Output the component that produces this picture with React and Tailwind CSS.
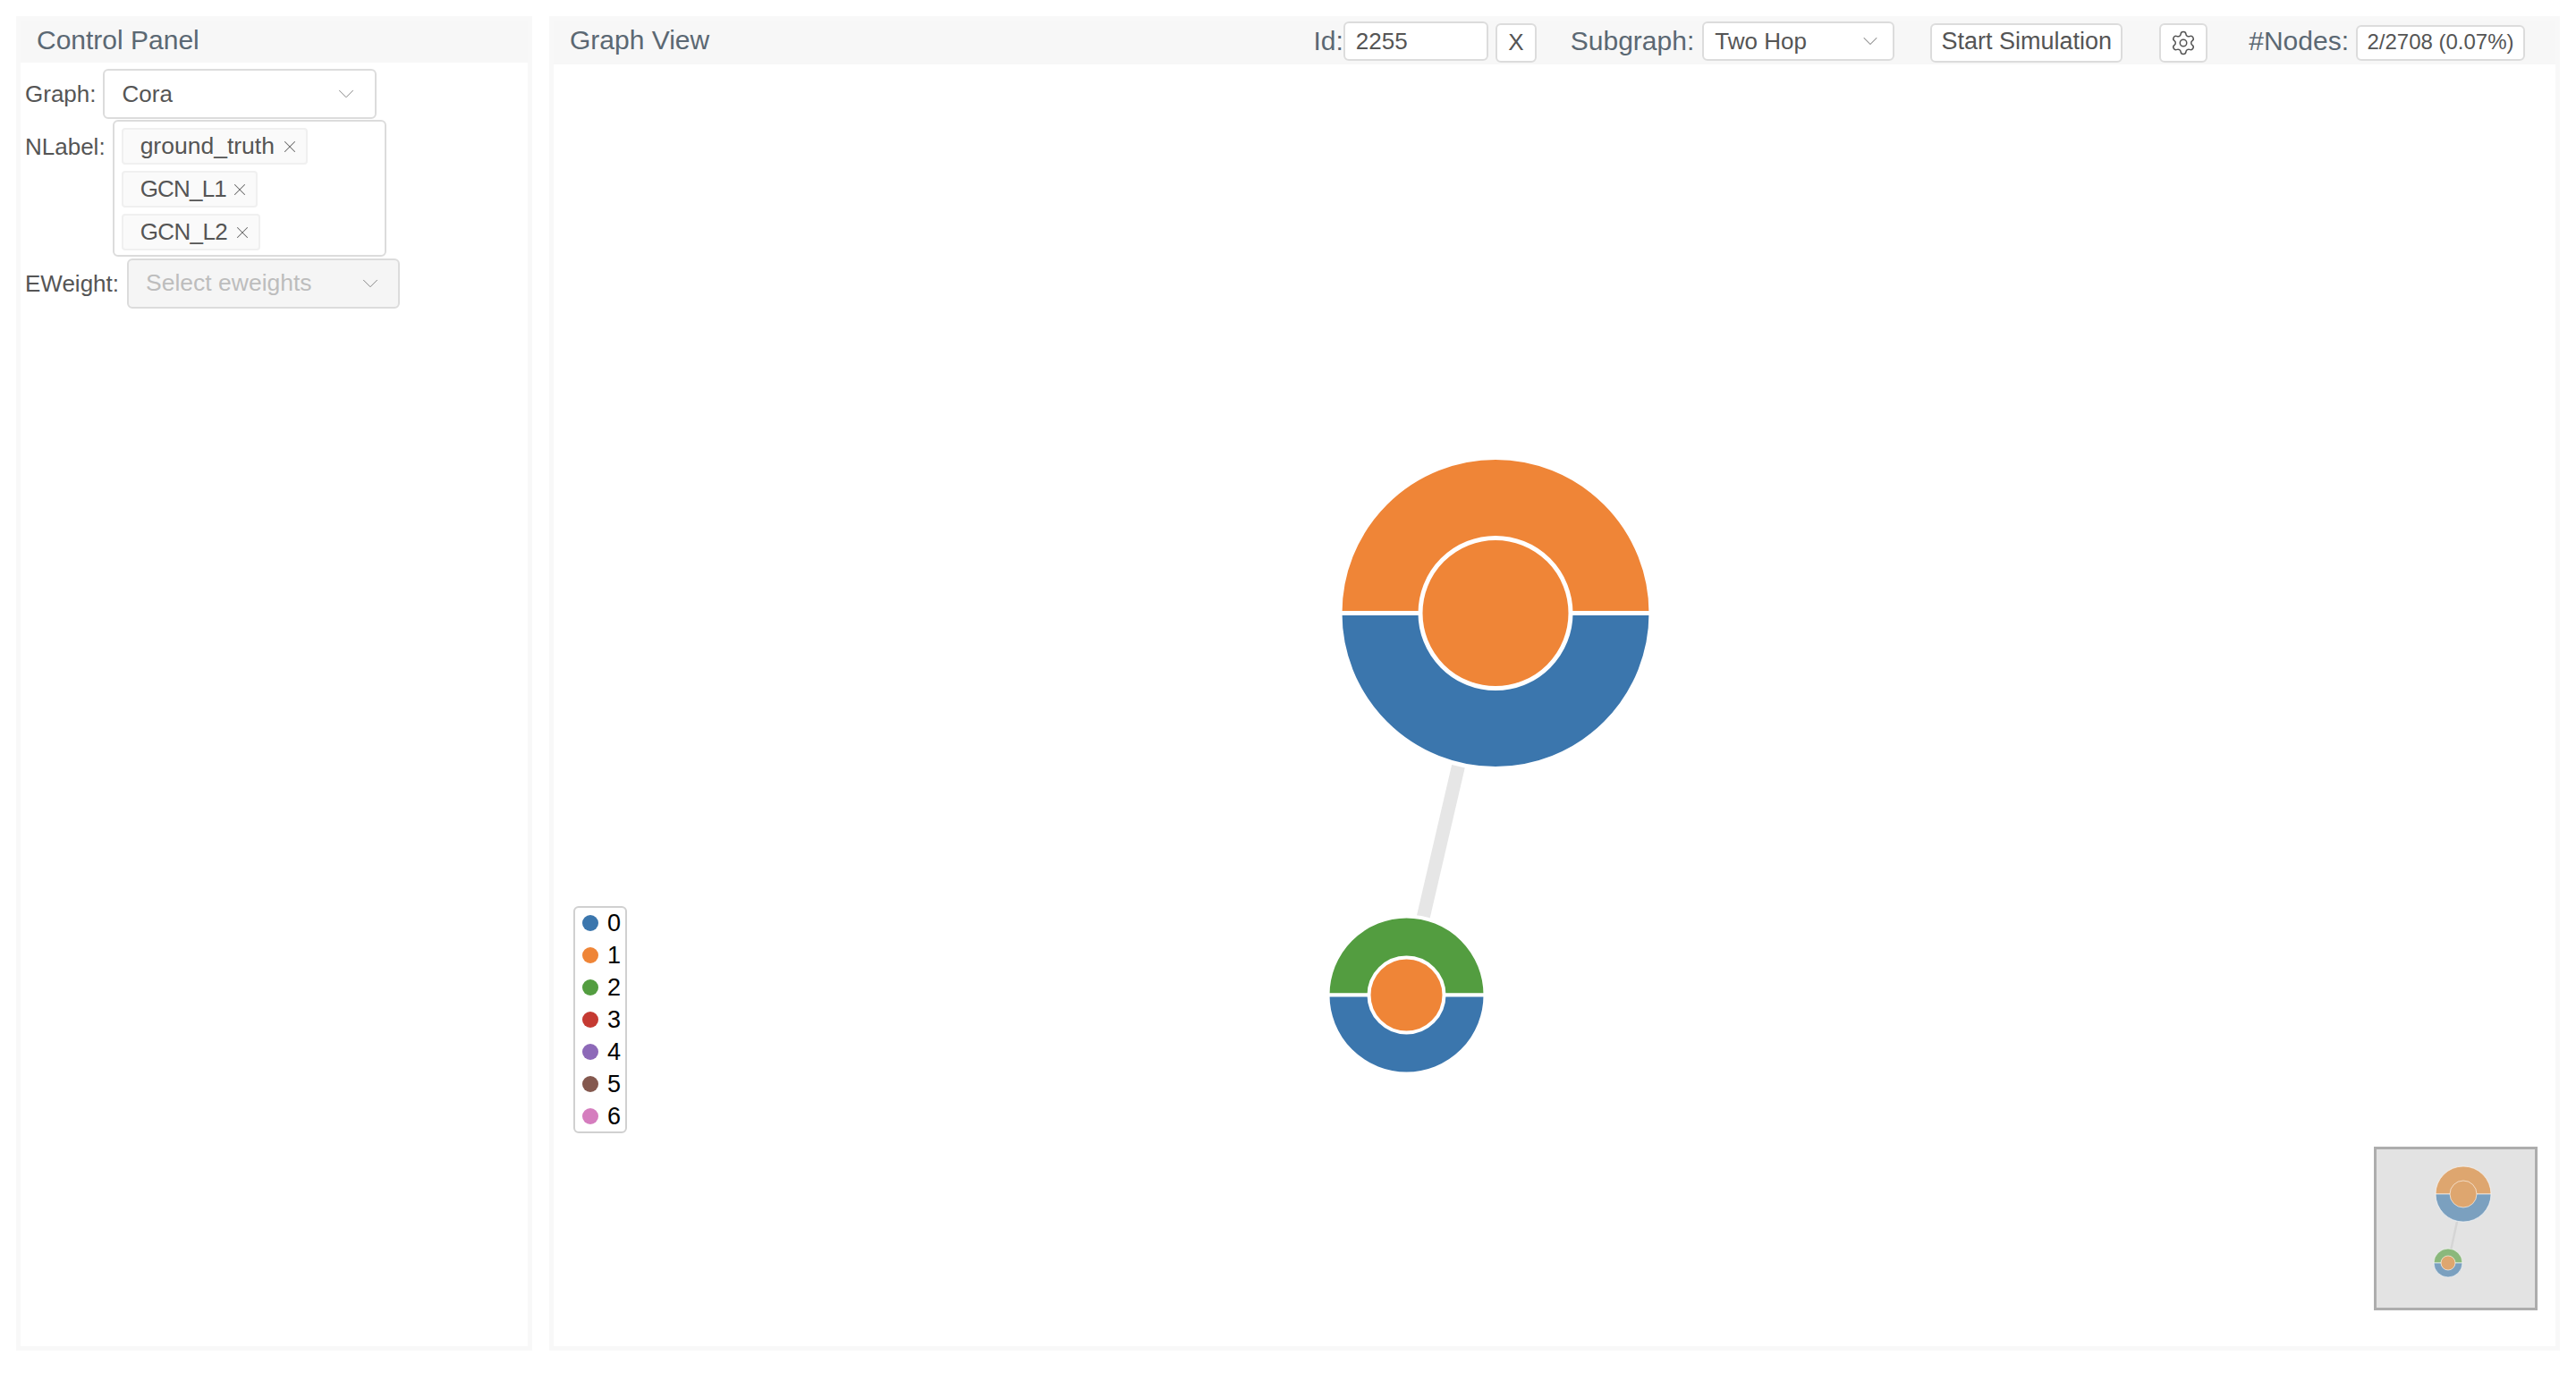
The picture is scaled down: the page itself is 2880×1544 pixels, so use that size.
import { ChevronDown, Settings, X } from "lucide-react";

const FONT = "font-['Liberation_Sans',sans-serif]";

const LEGEND = [
    { label: "0", color: "bg-[#3b76ad]" },
    { label: "1", color: "bg-[#ef8537]" },
    { label: "2", color: "bg-[#539d40]" },
    { label: "3", color: "bg-[#c53a32]" },
    { label: "4", color: "bg-[#8d69b8]" },
    { label: "5", color: "bg-[#84584e]" },
    { label: "6", color: "bg-[#d57dbe]" },
];

// half ring + middle disc, cx/cy in page coordinates
function Donut({ cx, cy, r, inner, top, bottom, mid, stroke = 3 }) {
    return (
        <g stroke="#fff" strokeWidth={stroke}>
            <path d={`M${cx - r} ${cy}A${r} ${r} 0 0 1 ${cx + r} ${cy}Z`} fill={top} />
            <path d={`M${cx - r} ${cy}A${r} ${r} 0 0 0 ${cx + r} ${cy}Z`} fill={bottom} />
            <circle cx={cx} cy={cy} r={inner} fill={mid} />
        </g>
    );
}

function Tag({ text, className, textClass }) {
    return (
        <div className={`flex h-[41px] items-center justify-between rounded-[4px] border-2 border-[#f0f0f0] bg-[#fafafa] pl-[19px] pr-[7px] text-[26px] text-[#555] ${className}`}>
            <span className={textClass}>{text}</span>
            <X size={22} strokeWidth={1.1} className="text-[#666]" />
        </div>
    );
}

export default function App() {
    return (
        <div className={`flex h-screen w-full gap-[19px] bg-white pb-[34px] pl-[18px] pr-[18px] pt-[18px] ${FONT}`}>
            {/* Control panel */}
            <div className="flex w-[577px] flex-col border-[5px] border-[#f8f8f8]">
                <div className="flex h-[47px] items-center bg-[#f7f7f7] pb-[4px] pl-[18px] text-[30px] text-[#5b6873]">Control Panel</div>
                <div className="flex flex-col pl-[5px] pt-[7px] text-[26px] text-[#555]">
                    <div className="flex items-center gap-[7px]">
                        <span>Graph:</span>
                        <div className="flex h-[56px] w-[306px] items-center justify-between rounded-[6px] border-2 border-[#dcdcdc] pl-[20px] pr-[17px]">
                            <span>Cora</span>
                            <ChevronDown size={30} strokeWidth={0.8} className="text-[#888]" />
                        </div>
                    </div>
                    <div className="flex items-start gap-[8px]">
                        <span className="pt-[12px]">NLabel:</span>
                        <div className="mt-[1px] flex h-[153px] w-[306px] flex-col items-start gap-[7px] rounded-[6px] border-2 border-[#dcdcdc] pl-[8px] pt-[7px]">
                            <Tag text="ground_truth" className="w-[208px]" textClass="text-[26.5px]" />
                            <Tag text="GCN_L1" className="w-[152px]" textClass="tracking-[-0.8px]" />
                            <Tag text="GCN_L2" className="w-[155px]" textClass="tracking-[-0.6px]" />
                        </div>
                    </div>
                    <div className="mt-[2px] flex items-center gap-[9px]">
                        <span>EWeight:</span>
                        <div className="flex h-[56px] w-[305px] items-center justify-between rounded-[6px] border-2 border-[#dcdcdc] bg-[#f5f5f5] pl-[19px] pr-[16px] text-[26.5px] text-[#bdbdbd]">
                            <span>Select eweights</span>
                            <ChevronDown size={30} strokeWidth={0.8} className="text-[#888]" />
                        </div>
                    </div>
                </div>
            </div>

            {/* Graph view */}
            <div className="relative flex flex-1 flex-col border-[5px] border-[#f8f8f8]">
                <div className="z-10 flex h-[49px] items-center bg-[#f7f7f7] pl-[18px] pr-[34px] text-[30px] text-[#5b6873]">
                    <span className="mr-auto pb-[6px]">Graph View</span>
                    <span className="pb-[4px]">Id:</span>
                    <div className="mb-[3px] flex h-[44px] w-[162px] items-center rounded-[6px] border-2 border-[#dcdcdc] bg-white pl-[12px] text-[26px] text-[#555]">2255</div>
                    <div className="ml-[8px] flex h-[44px] w-[46px] items-center justify-center rounded-[6px] border-2 border-[#dcdcdc] bg-white text-[26px] text-[#555]">X</div>
                    <span className="ml-[38px] pb-[4px]">Subgraph:</span>
                    <div className="mb-[3px] ml-[9px] flex h-[44px] w-[215px] items-center justify-between rounded-[6px] border-2 border-[#dcdcdc] bg-white pl-[12px] pr-[11px] text-[26px] text-[#555]">
                        <span>Two Hop</span>
                        <ChevronDown size={28} strokeWidth={0.9} className="text-[#888]" />
                    </div>
                    <div className="ml-[40px] flex h-[44px] w-[215px] items-center justify-center rounded-[6px] border-2 border-[#dcdcdc] bg-white pb-[3px] text-[27px] text-[#555]">Start Simulation</div>
                    <div className="ml-[41px] flex h-[44px] w-[54px] items-center justify-center rounded-[6px] border-2 border-[#dcdcdc] bg-white">
                        <Settings size={30} strokeWidth={1.2} className="text-[#555]" />
                    </div>
                    <span className="ml-[46px] pb-[4px]">#Nodes:</span>
                    <div className="ml-[8px] flex h-[40px] w-[189px] items-center justify-center rounded-[6px] border-2 border-[#dcdcdc] bg-white pb-[2px] text-[24px] text-[#555]">2/2708 (0.07%)</div>
                </div>

                <svg className="absolute left-0 top-0 h-[1482px] w-[2236px]" viewBox="619 23 2236 1482">
                    <line x1="1632" y1="850" x2="1589" y2="1035" stroke="#e6e6e6" strokeWidth="15" />
                    <Donut cx={1672} cy={685.5} r={174} inner={84} top="#ef8537" bottom="#3b76ad" mid="#ef8537" stroke={5} />
                    <Donut cx={1572.5} cy={1112.5} r={88} inner={42} top="#539d40" bottom="#3b76ad" mid="#ef8537" stroke={4} />
                </svg>

                {/* legend */}
                <div className="absolute left-[22px] top-[990px] flex h-[254px] w-[60px] flex-col justify-center rounded-[6px] border-2 border-[#d0d0d0] bg-white pl-[8px] text-[27px] text-black">
                    {LEGEND.map((item) => (
                        <div key={item.label} className="flex h-[36px] items-center gap-[10px]">
                            <span className={`h-[18px] w-[18px] rounded-full ${item.color}`} />
                            <span>{item.label}</span>
                        </div>
                    ))}
                </div>

                {/* minimap */}
                <div className="absolute left-[2035px] top-[1259px] h-[183px] w-[183px] border-[3px] border-[#adadad] bg-[#e3e3e3]">
                    <svg className="h-full w-full blur-[0.6px]" viewBox="2657 1285 177 177">
                        <line x1="2747" y1="1366" x2="2740" y2="1398" stroke="#d5d5d5" strokeWidth="2.5" />
                        <Donut cx={2754} cy={1335} r={31} inner={15} top="#dea66f" bottom="#7ba0bf" mid="#dea66f" stroke={0.6} />
                        <Donut cx={2737} cy={1412} r={16} inner={8} top="#8ab87c" bottom="#7ba0bf" mid="#dea66f" stroke={0.6} />
                    </svg>
                </div>
            </div>
        </div>
    );
}
